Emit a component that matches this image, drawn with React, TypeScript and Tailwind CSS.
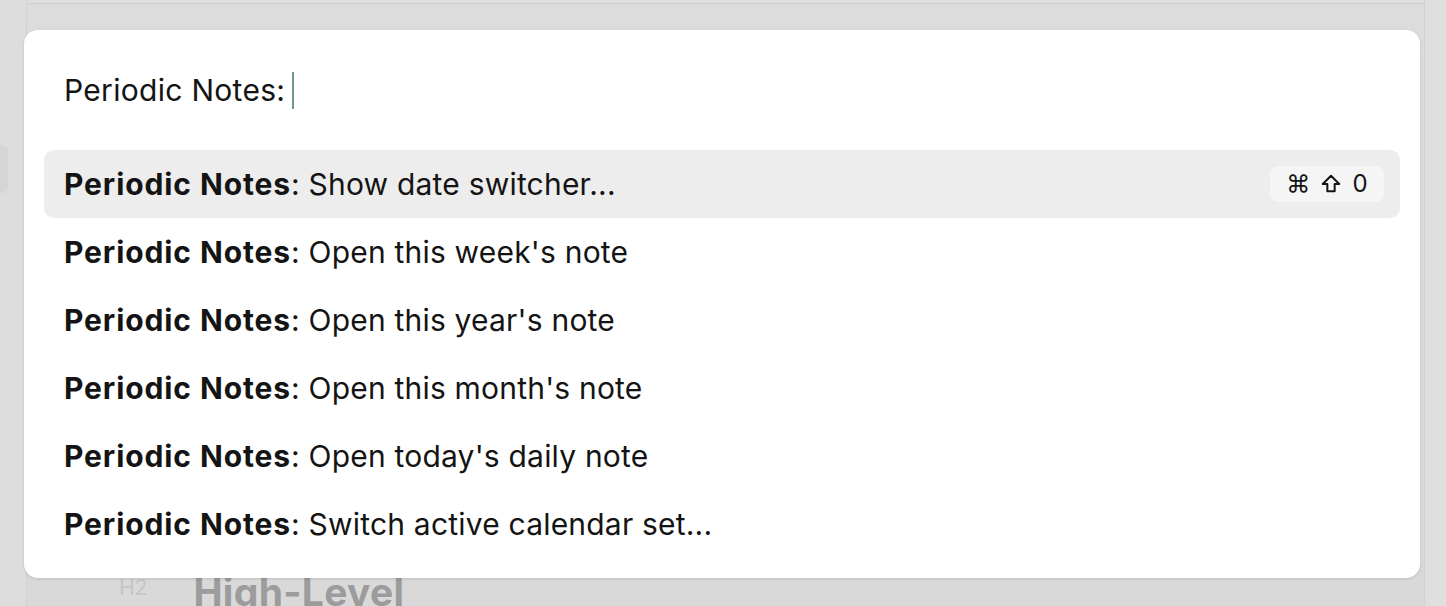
const commands = [
  { label: 'Show date switcher...', shortcut: true },
  { label: "Open this week's note" },
  { label: "Open this year's note" },
  { label: "Open this month's note" },
  { label: "Open today's daily note" },
  { label: 'Switch active calendar set...' },
];

export default function App() {
  return (
    <div className="relative h-[606px] w-full overflow-hidden bg-[#dbdbdb] font-['Inter','Liberation_Sans',sans-serif] text-[#141414]">
      {/* dimmed editor behind the palette */}
      <div className="flex h-full">
        <div className="relative w-[27px] shrink-0 border-r border-[#d2d2d2] bg-[#dddddd]">
          <div className="mt-[145px] h-[48px] w-[8px] rounded-r-md bg-[#d5d5d5]" />
        </div>
        <div className="flex flex-1 flex-col">
          <div className="h-[4px] border-b border-[#d0d0d0] bg-[#dfdfdf]" />
          <div className="flex-1 bg-gradient-to-b from-[#dcdcdc] to-[#d9d9d9]" />
          <div className="flex h-[40px] items-end gap-[46px] pl-[92px] bg-[#d9d9d9]">
            <span className="mb-[8px] text-[21px] leading-none text-[#c6c6c6]">H2</span>
            <span className="-mb-[5px] text-[39px] font-bold leading-none tracking-[0.3px] text-[#9c9c9c]">High-Level</span>
          </div>
        </div>
        <div className="w-[22px] shrink-0 border-l border-[#d2d2d2] bg-[#dfdfdf]" />
      </div>

      {/* command palette */}
      <div className="absolute left-[24px] top-[30px] flex h-[548px] w-[1396px] flex-col rounded-[14px] bg-white shadow-[0_1px_3px_rgba(0,0,0,0.12)]">
        <div className="flex h-[120px] items-center px-[40px]">
          <span className="text-[30px] tracking-[0.3px]">Periodic Notes:</span>
          <span className="ml-[7px] h-[37px] w-[2px] bg-[#6f968f]" />
        </div>
        <div className="flex flex-col px-[20px]">
          {commands.map((c, i) => (
            <div
              key={i}
              className={`flex h-[68px] items-center justify-between rounded-[10px] pl-[20px] pr-[16px] text-[30px] tracking-[0.2px] ${
                i === 0 ? 'bg-[#ededed]' : ''
              }`}
            >
              <span>
                <span className="font-bold tracking-[0.9px]">Periodic Notes</span>: {c.label}
              </span>
              {c.shortcut && (
                <span className="flex h-[36px] w-[114px] items-center justify-center gap-[10px] rounded-[8px] bg-[#f5f5f5] text-[24px]">
                  <span>⌘</span>
                  <svg width="22" height="22" viewBox="0 0 24 24" fill="none" stroke="#141414" strokeWidth="2.2" strokeLinejoin="round">
                    <path d="M12 3 3 12h5v8h8v-8h5z" />
                  </svg>
                  <span>0</span>
                </span>
              )}
            </div>
          ))}
        </div>
      </div>
    </div>
  );
}
